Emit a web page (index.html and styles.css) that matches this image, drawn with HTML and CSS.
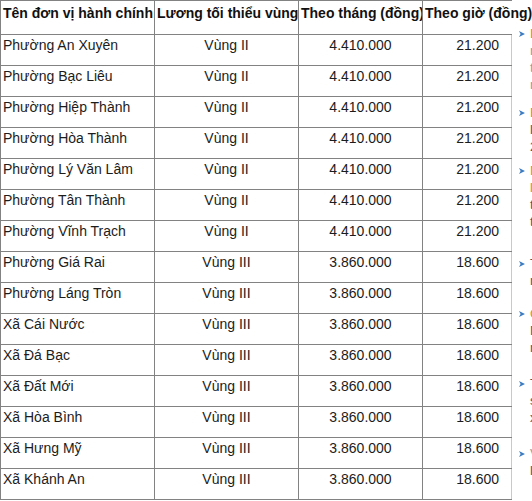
FILE: index.html
```html
<!DOCTYPE html>
<html lang="vi">
<head>
<meta charset="utf-8">
<link rel="stylesheet" href="styles.css">
</head>
<body>
<div class="page">
  <table class="wage">
    <colgroup>
      <col class="c1"><col class="c2"><col class="c3"><col class="c4">
    </colgroup>
    <thead>
      <tr><th>Tên đơn vị hành chính</th><th>Lương tối thiểu vùng</th><th>Theo tháng (đồng)</th><th class="last">Theo giờ (đồng)</th></tr>
    </thead>
    <tbody>
      <tr><td>Phường An Xuyên</td><td class="ctr">Vùng II</td><td class="ctr">4.410.000</td><td class="hr">21.200</td></tr>
      <tr><td>Phường Bạc Liêu</td><td class="ctr">Vùng II</td><td class="ctr">4.410.000</td><td class="hr">21.200</td></tr>
      <tr><td>Phường Hiệp Thành</td><td class="ctr">Vùng II</td><td class="ctr">4.410.000</td><td class="hr">21.200</td></tr>
      <tr><td>Phường Hòa Thành</td><td class="ctr">Vùng II</td><td class="ctr">4.410.000</td><td class="hr">21.200</td></tr>
      <tr><td>Phường Lý Văn Lâm</td><td class="ctr">Vùng II</td><td class="ctr">4.410.000</td><td class="hr">21.200</td></tr>
      <tr><td>Phường Tân Thành</td><td class="ctr">Vùng II</td><td class="ctr">4.410.000</td><td class="hr">21.200</td></tr>
      <tr><td>Phường Vĩnh Trạch</td><td class="ctr">Vùng II</td><td class="ctr">4.410.000</td><td class="hr">21.200</td></tr>
      <tr><td>Phường Giá Rai</td><td class="ctr">Vùng III</td><td class="ctr">3.860.000</td><td class="hr">18.600</td></tr>
      <tr><td>Phường Láng Tròn</td><td class="ctr">Vùng III</td><td class="ctr">3.860.000</td><td class="hr">18.600</td></tr>
      <tr><td>Xã Cái Nước</td><td class="ctr">Vùng III</td><td class="ctr">3.860.000</td><td class="hr">18.600</td></tr>
      <tr><td>Xã Đá Bạc</td><td class="ctr">Vùng III</td><td class="ctr">3.860.000</td><td class="hr">18.600</td></tr>
      <tr><td>Xã Đất Mới</td><td class="ctr">Vùng III</td><td class="ctr">3.860.000</td><td class="hr">18.600</td></tr>
      <tr><td>Xã Hòa Bình</td><td class="ctr">Vùng III</td><td class="ctr">3.860.000</td><td class="hr">18.600</td></tr>
      <tr><td>Xã Hưng Mỹ</td><td class="ctr">Vùng III</td><td class="ctr">3.860.000</td><td class="hr">18.600</td></tr>
      <tr><td>Xã Khánh An</td><td class="ctr">Vùng III</td><td class="ctr">3.860.000</td><td class="hr">18.600</td></tr>
    </tbody>
  </table>
  <aside class="side">
    <ul class="links">
      <li class="item h79"><svg class="arr" width="6" height="6" viewBox="0 0 6 6"><path d="M0 0L6 3L0 6L1.6 3Z"/></svg><div class="txt"><span class="ln or">Lương</span><span class="ln gy">mới</span><span class="ln gy">từ</span><span class="ln gy">nay</span></div></li>
      <li class="item h58"><svg class="arr" width="6" height="6" viewBox="0 0 6 6"><path d="M0 0L6 3L0 6L1.6 3Z"/></svg><div class="txt"><span class="ln or">Bảng</span><span class="ln dk">lương</span><span class="ln dk">2025</span></div></li>
      <li class="item h93"><svg class="arr" width="6" height="6" viewBox="0 0 6 6"><path d="M0 0L6 3L0 6L1.6 3Z"/></svg><div class="txt"><span class="ln or">Mức</span><span class="ln or">lương</span><span class="ln dk">tối</span><span class="ln dk">thiểu</span></div></li>
      <li class="item h50"><svg class="arr" width="6" height="6" viewBox="0 0 6 6"><path d="M0 0L6 3L0 6L1.6 3Z"/></svg><div class="txt"><span class="ln dk">Tin</span><span class="ln dk">mới</span></div></li>
      <li class="item h70"><svg class="arr" width="6" height="6" viewBox="0 0 6 6"><path d="M0 0L6 3L0 6L1.6 3Z"/></svg><div class="txt"><span class="ln or">Cà</span><span class="ln dk">Mau</span><span class="ln dk">mới</span></div></li>
      <li class="item h70"><svg class="arr" width="6" height="6" viewBox="0 0 6 6"><path d="M0 0L6 3L0 6L1.6 3Z"/></svg><div class="txt"><span class="ln dk">Thời</span><span class="ln dk">sự</span><span class="ln dk">xã</span></div></li>
      <li class="item h70"><svg class="arr" width="6" height="6" viewBox="0 0 6 6"><path d="M0 0L6 3L0 6L1.6 3Z"/></svg><div class="txt"><span class="ln gy">Việc</span><span class="ln dk">làm</span></div></li>
    </ul>
  </aside>
</div>
</body>
</html>
```

FILE: styles.css
```css
html, body {
  margin: 0;
  padding: 0;
  background: #ffffff;
}

.page {
  display: flex;
  align-items: flex-start;
  width: 532px;
  height: 501px;
  overflow: hidden;
  font-family: "Liberation Sans", Arial, sans-serif;
  color: #1c1c1c;
}

.wage {
  border-collapse: collapse;
  table-layout: fixed;
  width: 511px;
  flex-shrink: 0;
  font-size: 14px;
}

.c1 { width: 154px; }
.c2 { width: 144px; }
.c3 { width: 124px; }
.c4 { width: 89px; }

.wage th,
.wage td {
  border: 1px solid #828282;
  line-height: 16px;
  vertical-align: top;
  white-space: nowrap;
  overflow: hidden;
}

.wage th {
  font-weight: bold;
  text-align: left;
  padding: 4px 0 13px 2px;
  color: #111;
}

.wage th.last {
  overflow: visible;
  border-right-color: transparent;
}

.wage td {
  padding: 2px 2px 12px 2px;
}

.wage td:last-child {
  border-right-color: #c9c9c9;
}

.wage .ctr { text-align: center; }
.wage .hr { text-align: right; padding-right: 12px; }

.side {
  flex-shrink: 0;
  width: 200px;
  padding-top: 30px;
}

.links {
  list-style: none;
  margin: 0;
  padding: 0;
}

.item {
  display: flex;
  align-items: flex-start;
  gap: 5px;
  padding-left: 7px;
  box-sizing: border-box;
}

.h79 { height: 79px; }
.h58 { height: 58px; }
.h93 { height: 93px; }
.h50 { height: 50px; }
.h70 { height: 70px; }

.arr {
  flex-shrink: 0;
  margin-top: 1px;
  fill: #3d7cc0;
}

.txt {
  display: flex;
  flex-direction: column;
  font-size: 13px;
  line-height: 17px;
  margin-top: -5px;
}

.ln { display: block; }
.or { color: #d28a3c; }
.dk { color: #555; }
.gy { color: #999; }
```
